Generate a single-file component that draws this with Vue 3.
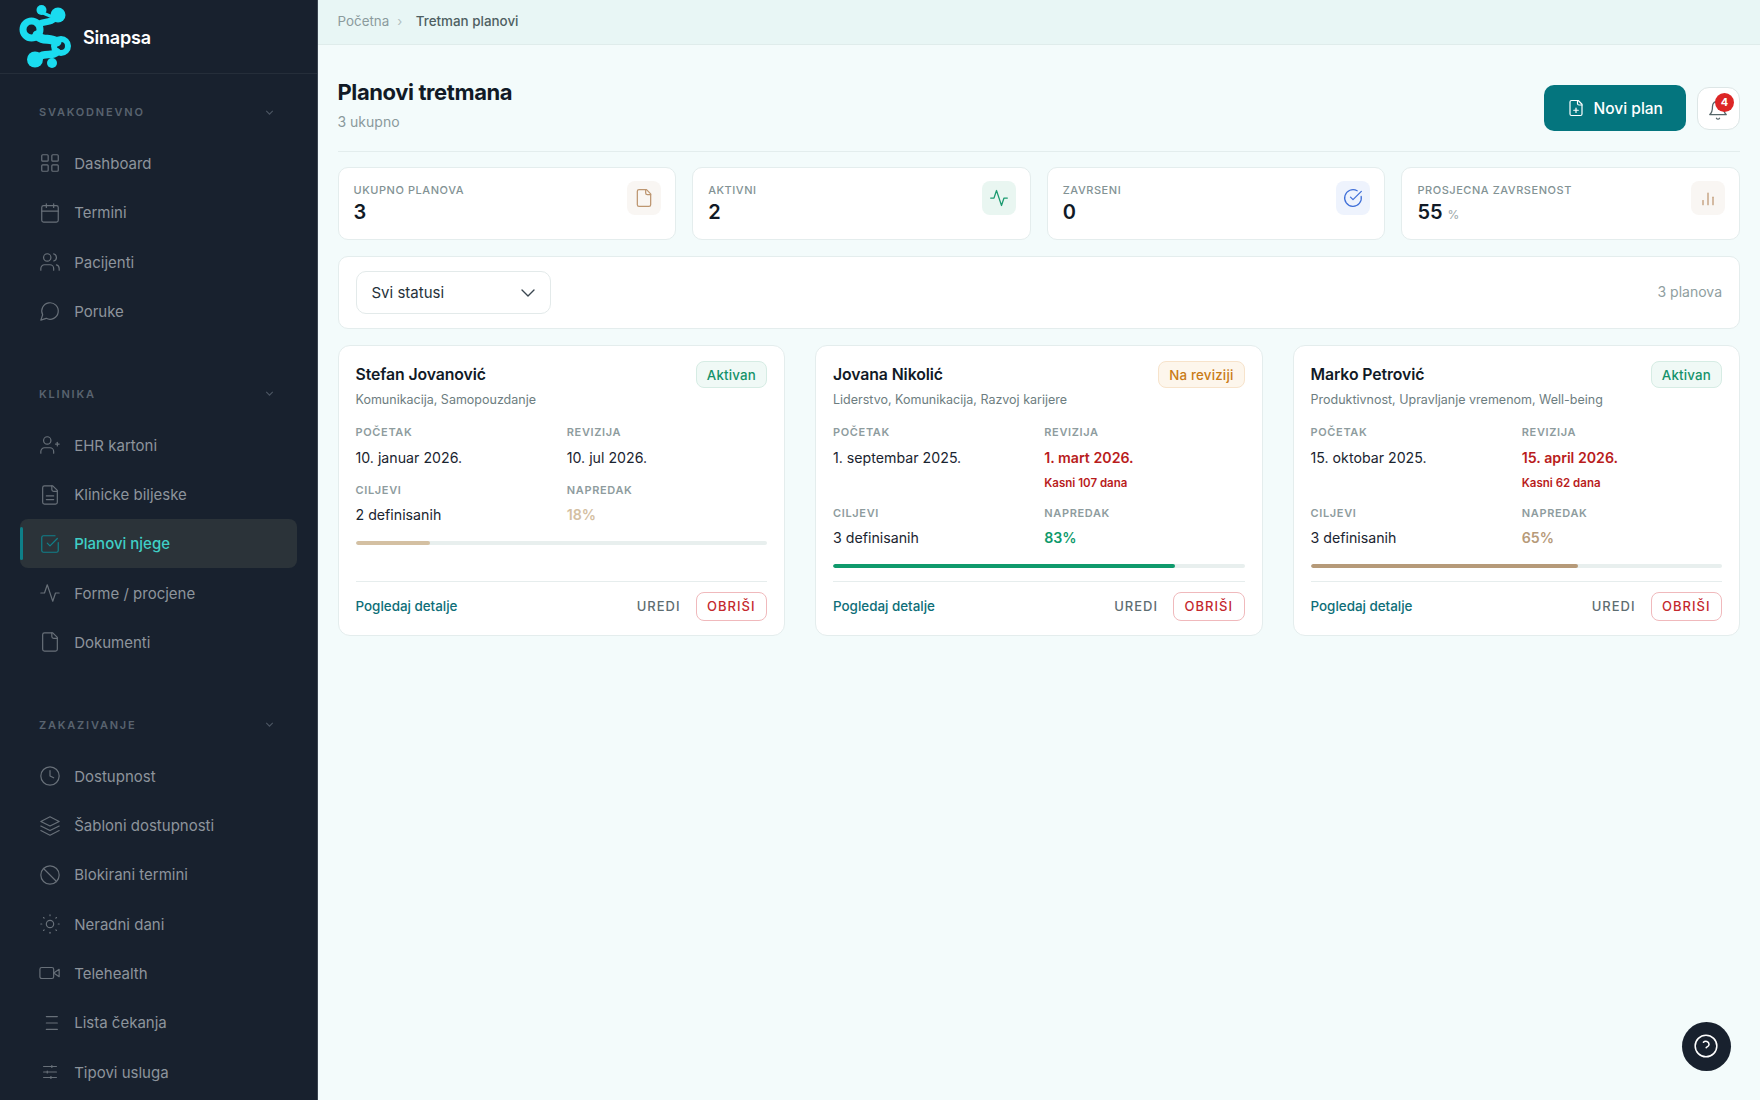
<script setup>
const P = {
  grid: ['M4 3h5a1 1 0 0 1 1 1v5a1 1 0 0 1-1 1H4a1 1 0 0 1-1-1V4a1 1 0 0 1 1-1z','M15 3h5a1 1 0 0 1 1 1v5a1 1 0 0 1-1 1h-5a1 1 0 0 1-1-1V4a1 1 0 0 1 1-1z','M4 14h5a1 1 0 0 1 1 1v5a1 1 0 0 1-1 1H4a1 1 0 0 1-1-1v-5a1 1 0 0 1 1-1z','M15 14h5a1 1 0 0 1 1 1v5a1 1 0 0 1-1 1h-5a1 1 0 0 1-1-1v-5a1 1 0 0 1 1-1z'],
  calendar: ['M8 2v4','M16 2v4','M5 4h14a2 2 0 0 1 2 2v14a2 2 0 0 1-2 2H5a2 2 0 0 1-2-2V6a2 2 0 0 1 2-2z','M3 10h18'],
  users: ['M16 21v-2a4 4 0 0 0-4-4H6a4 4 0 0 0-4 4v2','M13 7a4 4 0 1 1-8 0 4 4 0 0 1 8 0z','M22 21v-2a4 4 0 0 0-3-3.87','M16 3.13a4 4 0 0 1 0 7.75'],
  message: ['M7.9 20A9 9 0 1 0 4 16.1L2 22Z'],
  userPlus: ['M16 21v-2a4 4 0 0 0-4-4H6a4 4 0 0 0-4 4v2','M13 7a4 4 0 1 1-8 0 4 4 0 0 1 8 0z','M20 9v4','M18 11h4'],
  fileText: ['M15 2H6a2 2 0 0 0-2 2v16a2 2 0 0 0 2 2h12a2 2 0 0 0 2-2V7Z','M14 2v4a2 2 0 0 0 2 2h4','M16 13H8','M16 17H8'],
  check: ['M21 10.5V19a2 2 0 0 1-2 2H5a2 2 0 0 1-2-2V5a2 2 0 0 1 2-2h12.5','m9 11 3 3 8-8'],
  activity: ['M22 12h-4l-3 9L9 3l-3 9H2'],
  file: ['M15 2H6a2 2 0 0 0-2 2v16a2 2 0 0 0 2 2h12a2 2 0 0 0 2-2V7Z','M14 2v4a2 2 0 0 0 2 2h4'],
  clock: ['M22 12a10 10 0 1 1-20 0 10 10 0 0 1 20 0z','M12 6v6l4 2'],
  layers: ['M12 2 2 7l10 5 10-5-10-5z','m2 12 10 5 10-5','m2 17 10 5 10-5'],
  ban: ['M22 12a10 10 0 1 1-20 0 10 10 0 0 1 20 0z','m4.9 4.9 14.2 14.2'],
  sun: ['M16 12a4 4 0 1 1-8 0 4 4 0 0 1 8 0z','M12 2v1','M12 21v1','m4.93 4.93.7.7','m18.37 18.37.7.7','M2 12h1','M21 12h1','m5.63 18.37-.7.7','m19.07 4.93-.7.7'],
  video: ['m22 8-6 4 6 4V8z','M3 6h11a2 2 0 0 1 2 2v8a2 2 0 0 1-2 2H3a2 2 0 0 1-2-2V8a2 2 0 0 1 2-2z'],
  list: ['M8 5h12','M8 12h12','M8 19h12'],
  sliders: ['M5 6h14','M5 12h14','M5 18h14','M14 5v2','M9 11v2','M13 17v2'],
  circleCheck: ['M21.8 10A10 10 0 1 1 17 3.34','m9 11 3 3L22 4'],
  bars: ['M6 20v-5','M12 20V6','M18 20v-9'],
  filePlus: ['M15 2H6a2 2 0 0 0-2 2v16a2 2 0 0 0 2 2h12a2 2 0 0 0 2-2V7Z','M14 2v4a2 2 0 0 0 2 2h4','M9 15h6','M12 18v-6'],
  bell: ['M6 8a6 6 0 0 1 12 0c0 7 3 9 3 9H3s3-2 3-9','M10.3 21a1.94 1.94 0 0 0 3.4 0'],
  chevron: ['m6 9 6 6 6-6'],
  help: ['M22 12a10 10 0 1 1-20 0 10 10 0 0 1 20 0z','M9.6 8.6a3 3 0 0 1 5.2 1.9c0 1.6-1.8 2.2-2.6 3'],
}

const sections = [
  { title: 'SVAKODNEVNO', items: [
    { label: 'Dashboard', icon: 'grid' }, { label: 'Termini', icon: 'calendar' },
    { label: 'Pacijenti', icon: 'users' }, { label: 'Poruke', icon: 'message' } ] },
  { title: 'KLINIKA', items: [
    { label: 'EHR kartoni', icon: 'userPlus' }, { label: 'Klinicke biljeske', icon: 'fileText' },
    { label: 'Planovi njege', icon: 'check', active: true }, { label: 'Forme / procjene', icon: 'activity' },
    { label: 'Dokumenti', icon: 'file' } ] },
  { title: 'ZAKAZIVANJE', items: [
    { label: 'Dostupnost', icon: 'clock' }, { label: 'Šabloni dostupnosti', icon: 'layers' },
    { label: 'Blokirani termini', icon: 'ban' }, { label: 'Neradni dani', icon: 'sun' },
    { label: 'Telehealth', icon: 'video' }, { label: 'Lista čekanja', icon: 'list' },
    { label: 'Tipovi usluga', icon: 'sliders' } ] },
]

const stats = [
  { label: 'UKUPNO PLANOVA', value: '3', icon: 'file', tone: 'tan' },
  { label: 'AKTIVNI', value: '2', icon: 'activity', tone: 'green' },
  { label: 'ZAVRSENI', value: '0', icon: 'circleCheck', tone: 'blue' },
  { label: 'PROSJECNA ZAVRSENOST', value: '55', unit: '%', icon: 'bars', tone: 'tan' },
]

const plans = [
  { name: 'Stefan Jovanović', status: 'Aktivan', statusTone: 'active', areas: 'Komunikacija, Samopouzdanje',
    start: '10. januar 2026.', review: '10. jul 2026.', goals: '2 definisanih', progress: 18, color: '#d4c0a2' },
  { name: 'Jovana Nikolić', status: 'Na reviziji', statusTone: 'review', areas: 'Liderstvo, Komunikacija, Razvoj karijere',
    start: '1. septembar 2025.', review: '1. mart 2026.', late: 'Kasni 107 dana', goals: '3 definisanih', progress: 83, color: '#0f9a6c' },
  { name: 'Marko Petrović', status: 'Aktivan', statusTone: 'active', areas: 'Produktivnost, Upravljanje vremenom, Well-being',
    start: '15. oktobar 2025.', review: '15. april 2026.', late: 'Kasni 62 dana', goals: '3 definisanih', progress: 65, color: '#b69a79' },
]
</script>

<template>
  <div class="app">
    <aside class="sidebar">
      <div class="brand">
        <svg class="logo" viewBox="0 0 80 74" fill="none">
          <g stroke="#1adcef" stroke-linecap="round" fill="none">
            <path d="M55 17C52 23 45 21 39 24" stroke-width="6.5" />
            <path d="M43 13 50 16" stroke-width="3" />
            <path d="M37 35C42 42 50 37 57 42" stroke-width="9" />
            <path d="M57 52C52 57 45 52 39 57" stroke-width="7.5" />
          </g>
          <circle cx="58" cy="15" r="7.5" fill="#1adcef" />
          <circle cx="41.5" cy="10" r="5" fill="#1adcef" />
          <circle cx="31.5" cy="29.5" r="8.5" stroke="#1adcef" stroke-width="7" />
          <circle cx="61" cy="46" r="7" stroke="#1adcef" stroke-width="6" />
          <circle cx="35" cy="59.5" r="8" fill="#1adcef" />
          <circle cx="52" cy="63" r="5" fill="#1adcef" />
        </svg>
        <span class="brand-name">Sinapsa</span>
      </div>
      <nav class="nav">
        <section v-for="s in sections" :key="s.title" class="nav-section">
          <div class="nav-title">
            <span>{{ s.title }}</span>
            <svg class="nav-chev" viewBox="0 0 24 24" fill="none" stroke="currentColor" stroke-width="2"><path v-for="d in P.chevron" :key="d" :d="d" /></svg>
          </div>
          <a v-for="it in s.items" :key="it.label" class="nav-item" :class="{ active: it.active }">
            <svg class="nav-icon" viewBox="0 0 24 24" fill="none" stroke="currentColor" stroke-width="1.3" stroke-linecap="round" stroke-linejoin="round"><path v-for="d in P[it.icon]" :key="d" :d="d" /></svg>
            <span>{{ it.label }}</span>
          </a>
        </section>
      </nav>
    </aside>

    <main class="main">
      <div class="topbar">
        <span class="crumb">Početna</span>
        <span class="crumb-sep">›</span>
        <span class="crumb-current">Tretman planovi</span>
      </div>
      <div class="page">
        <header class="head">
          <div>
            <h1>Planovi tretmana</h1>
            <p>3 ukupno</p>
          </div>
          <div class="actions">
            <button class="primary">
              <svg viewBox="0 0 24 24" fill="none" stroke="currentColor" stroke-width="1.6" stroke-linecap="round" stroke-linejoin="round"><path v-for="d in P.filePlus" :key="d" :d="d" /></svg>
              Novi plan
            </button>
            <button class="bell">
              <svg viewBox="0 0 24 24" fill="none" stroke="currentColor" stroke-width="1.4" stroke-linecap="round" stroke-linejoin="round"><path v-for="d in P.bell" :key="d" :d="d" /></svg>
              <span class="bell-badge">4</span>
            </button>
          </div>
        </header>

        <div class="stats">
          <div v-for="st in stats" :key="st.label" class="stat">
            <div>
              <div class="stat-label">{{ st.label }}</div>
              <div class="stat-value">{{ st.value }}<small v-if="st.unit">{{ st.unit }}</small></div>
            </div>
            <div class="stat-icon" :class="st.tone">
              <svg viewBox="0 0 24 24" fill="none" stroke="currentColor" stroke-width="1.5" stroke-linecap="round" stroke-linejoin="round"><path v-for="d in P[st.icon]" :key="d" :d="d" /></svg>
            </div>
          </div>
        </div>

        <div class="filter">
          <div class="select">
            <span>Svi statusi</span>
            <svg viewBox="0 0 24 24" fill="none" stroke="currentColor" stroke-width="1.8" stroke-linecap="round" stroke-linejoin="round"><path d="m4 8 8 8 8-8" /></svg>
          </div>
          <span class="count">3 planova</span>
        </div>

        <div class="plans">
          <article v-for="p in plans" :key="p.name" class="plan">
            <div class="plan-top">
              <h2>{{ p.name }}</h2>
              <span class="badge" :class="p.statusTone">{{ p.status }}</span>
            </div>
            <div class="areas">{{ p.areas }}</div>
            <div class="facts">
              <div>
                <div class="fact-label">POČETAK</div>
                <div class="fact-value">{{ p.start }}</div>
              </div>
              <div>
                <div class="fact-label">REVIZIJA</div>
                <div class="fact-value" :class="{ overdue: p.late }">{{ p.review }}</div>
                <div v-if="p.late" class="late">{{ p.late }}</div>
              </div>
              <div>
                <div class="fact-label">CILJEVI</div>
                <div class="fact-value">{{ p.goals }}</div>
              </div>
              <div>
                <div class="fact-label">NAPREDAK</div>
                <div class="fact-value pct" :style="{ color: p.color }">{{ p.progress }}%</div>
              </div>
            </div>
            <div class="track"><div class="fill" :style="{ width: p.progress + '%', background: p.color }"></div></div>
            <div class="plan-foot">
              <a class="details">Pogledaj detalje</a>
              <div class="foot-actions">
                <a class="edit">UREDI</a>
                <a class="delete">OBRIŠI</a>
              </div>
            </div>
          </article>
        </div>
      </div>
      <button class="help">
        <svg viewBox="0 0 24 24" fill="none" stroke="currentColor" stroke-width="1.4" stroke-linecap="round" stroke-linejoin="round"><path v-for="d in P.help" :key="d" :d="d" /></svg>
      </button>
    </main>
  </div>
</template>

<style>
html, body { margin: 0; background: #f3fbfb; }
</style>

<style scoped>
.app {
  display: flex;
  height: 1100px;
  overflow: hidden;
  font-family: Inter, "Noto Sans", sans-serif;
  color: #111827;
}
.sidebar {
  width: 318px;
  flex: none;
  background: #18212e;
  border-right: 1px solid #3a4450;
  box-sizing: border-box;
  overflow: hidden;
}
.brand {
  height: 74px;
  box-sizing: border-box;
  border-bottom: 1px solid #252e3a;
  display: flex;
  align-items: center;
  position: relative;
}
.logo { width: 80px; height: 74px; flex: none; }
.brand-name {
  margin-left: 3px;
  margin-top: 1px;
  color: #fff;
  font-size: 18px;
  font-weight: 600;
  letter-spacing: -0.2px;
}
.nav { padding: 24px 20px 0; }
.nav-section { margin-bottom: 43.8px; }
.nav-title {
  height: 28px;
  margin-bottom: 12.8px;
  padding: 0 21px 0 19px;
  display: flex;
  align-items: center;
  justify-content: space-between;
  color: #59636f;
  font-size: 11px;
  font-weight: 600;
  letter-spacing: 1.8px;
}
.nav-chev { width: 13px; height: 13px; color: #4c5663; }
.nav-item {
  position: relative;
  height: 49.3px;
  box-sizing: border-box;
  padding-left: 18.5px;
  display: flex;
  align-items: center;
  gap: 13.7px;
  color: #8d949c;
  font-size: 15px;
  border-radius: 8px;
}
.nav-icon { width: 22px; height: 22px; color: #687079; flex: none; }
.nav-item.active { background: #2b3339; color: #3fcfc6; font-weight: 500; }
.nav-item.active .nav-icon { color: #10808a; }
.nav-item.active::before {
  content: "";
  position: absolute;
  left: 0;
  top: 8px;
  bottom: 8px;
  width: 3px;
  background: #0e7f88;
  border-radius: 2px;
}
.main {
  position: relative;
  flex: 1;
  min-width: 0;
  background: #f3fbfb;
}
.topbar {
  height: 45px;
  box-sizing: border-box;
  background: #e8f6f5;
  border-bottom: 1px solid #dfeceb;
  padding: 0 20px 3px 19.5px;
  display: flex;
  align-items: center;
  font-size: 13.4px;
}
.crumb { color: #8b9b9d; }
.crumb-sep { color: #b3bfc0; margin: 0 13.5px 0 8px; font-size: 13px; }
.crumb-current { color: #4e5f62; font-weight: 500; }
.page { padding: 33px 20px 0 19.5px; }
.head {
  display: flex;
  justify-content: space-between;
  align-items: flex-start;
  padding-bottom: 19px;
  border-bottom: 1px solid #e3eded;
}
h1 {
  margin: 0;
  font-size: 22px;
  line-height: 29px;
  font-weight: 700;
  letter-spacing: -0.4px;
  color: #111a26;
}
.head p {
  margin: 5px 0 0;
  font-size: 14px;
  line-height: 20px;
  color: #8a999b;
}
.actions { display: flex; align-items: center; gap: 10.5px; margin-top: 7px; }
button { font-family: inherit; cursor: pointer; }
.primary {
  width: 142.5px;
  height: 46px;
  border: 0;
  border-radius: 10px;
  background: #04757e;
  color: #fff;
  font-size: 15.5px;
  font-weight: 500;
  display: flex;
  align-items: center;
  justify-content: center;
  gap: 9px;
}
.primary svg { width: 18px; height: 18px; }
.bell {
  position: relative;
  width: 43.5px;
  height: 43px;
  padding: 0;
  background: #fff;
  border: 1px solid #dde6e6;
  border-radius: 12px;
  color: #56676a;
  display: flex;
  align-items: center;
  justify-content: center;
}
.bell svg { width: 22px; height: 22px; margin-top: 3px; margin-right: 1px; }
.bell-badge {
  position: absolute;
  top: 5px;
  right: 5px;
  width: 19px;
  height: 19px;
  border-radius: 50%;
  background: #dc2626;
  color: #fff;
  font-size: 11px;
  font-weight: 700;
  line-height: 19px;
  text-align: center;
}
.stats {
  display: grid;
  grid-template-columns: repeat(4, 1fr);
  gap: 16px;
  margin-top: 15px;
}
.stat {
  height: 73px;
  box-sizing: border-box;
  background: #fff;
  border: 1px solid #e4eded;
  border-radius: 10px;
  padding: 13px 14px 0 15px;
  display: flex;
  justify-content: space-between;
  align-items: flex-start;
}
.stat-label {
  margin-top: 2px;
  font-size: 11px;
  line-height: 14px;
  font-weight: 500;
  letter-spacing: 0.55px;
  color: #829294;
}
.stat-value {
  font-size: 20px;
  line-height: 28px;
  font-weight: 600;
  color: #111a26;
  margin-top: 1px;
}
.stat-value small {
  font-size: 12px;
  font-weight: 400;
  color: #9aa7a9;
  margin-left: 5px;
}
.stat-icon {
  width: 34px;
  height: 34px;
  border-radius: 8px;
  display: flex;
  align-items: center;
  justify-content: center;
}
.stat-icon svg { width: 20px; height: 20px; }
.stat-icon.tan { background: #f9f6f3; color: #bd9670; }
.stat-icon.green { background: #e9f6f1; color: #1b9a70; }
.stat-icon.blue { background: #eef3fd; color: #3f6fd8; }
.filter {
  height: 73px;
  box-sizing: border-box;
  margin-top: 16px;
  background: #fff;
  border: 1px solid #e4eded;
  border-radius: 10px;
  padding: 0 17px;
  display: flex;
  align-items: center;
  justify-content: space-between;
}
.select {
  width: 195px;
  height: 43px;
  box-sizing: border-box;
  border: 1px solid #e3eaea;
  border-radius: 10px;
  padding: 0 13px 0 15px;
  display: flex;
  align-items: center;
  justify-content: space-between;
  font-size: 15px;
  color: #26323a;
}
.select svg { width: 18px; height: 18px; color: #3a4650; }
.count { font-size: 14px; color: #8f9ea0; margin-bottom: 3px; }
.plans {
  display: grid;
  grid-template-columns: repeat(3, 1fr);
  gap: 30px;
  margin-top: 16px;
}
.plan {
  box-sizing: border-box;
  background: #fff;
  border: 1px solid #e4eded;
  border-radius: 12px;
  padding: 15px 17px 14px;
  display: flex;
  flex-direction: column;
}
.plan-top {
  display: flex;
  justify-content: space-between;
  align-items: center;
  height: 27px;
}
h2 {
  margin: 0 0 1px;
  font-size: 15.8px;
  font-weight: 600;
  letter-spacing: -0.1px;
  color: #111a26;
}
.badge {
  height: 27px;
  box-sizing: border-box;
  padding: 0 10px;
  border-radius: 8px;
  border: 1px solid;
  display: flex;
  align-items: center;
  font-size: 13.3px;
  font-weight: 500;
  letter-spacing: 0.2px;
}
.badge.active { background: #f0f9f6; border-color: #d6ece4; color: #14926a; }
.badge.review { background: #fdf6ec; border-color: #f7e3cb; color: #c97a14; }
.areas {
  margin-top: 3px;
  font-size: 12.5px;
  line-height: 18px;
  color: #6d7d80;
}
.facts {
  display: grid;
  grid-template-columns: 1fr 1fr;
  column-gap: 11px;
  row-gap: 15px;
  margin-top: 16px;
}
.fact-label {
  font-size: 11px;
  line-height: 14px;
  font-weight: 600;
  letter-spacing: 0.65px;
  color: #8e9c9e;
}
.fact-value {
  margin-top: 8.5px;
  font-size: 14.2px;
  line-height: 20px;
  color: #1a2430;
}
.fact-value.overdue { color: #b91c1c; font-weight: 600; }
.fact-value.pct { font-weight: 600; }
.late {
  margin-top: 7px;
  font-size: 11.5px;
  line-height: 16px;
  font-weight: 600;
  color: #b91c1c;
}
.track {
  height: 4px;
  margin-top: 16px;
  margin-bottom: 13px;
  border-radius: 2px;
  background: #e8efee;
  overflow: hidden;
}
.fill { height: 100%; border-radius: 2px; }
.plan-foot {
  margin-top: auto;
  border-top: 1px solid #e6eded;
  padding-top: 10px;
  display: flex;
  align-items: center;
  justify-content: space-between;
}
.details { font-size: 13.4px; font-weight: 500; color: #0d6e78; margin-bottom: 1px; }
.foot-actions { display: flex; align-items: center; gap: 15px; }
.edit { font-size: 13px; font-weight: 500; letter-spacing: 1px; color: #5e6d71; margin-bottom: 1px; }
.delete {
  height: 29px;
  box-sizing: border-box;
  width: 71.5px;
  border: 1px solid #f0b9bc;
  border-radius: 8px;
  padding-bottom: 1px;
  display: flex;
  align-items: center;
  justify-content: center;
  font-size: 13px;
  font-weight: 500;
  letter-spacing: 1px;
  color: #c4282d;
}
.help {
  position: absolute;
  left: 1363.5px;
  top: 1021.5px;
  width: 49px;
  height: 49px;
  padding: 0;
  border: 0;
  border-radius: 50%;
  background: #18212e;
  color: #fff;
  display: flex;
  align-items: center;
  justify-content: center;
}
.help svg { width: 26px; height: 26px; }
</style>
